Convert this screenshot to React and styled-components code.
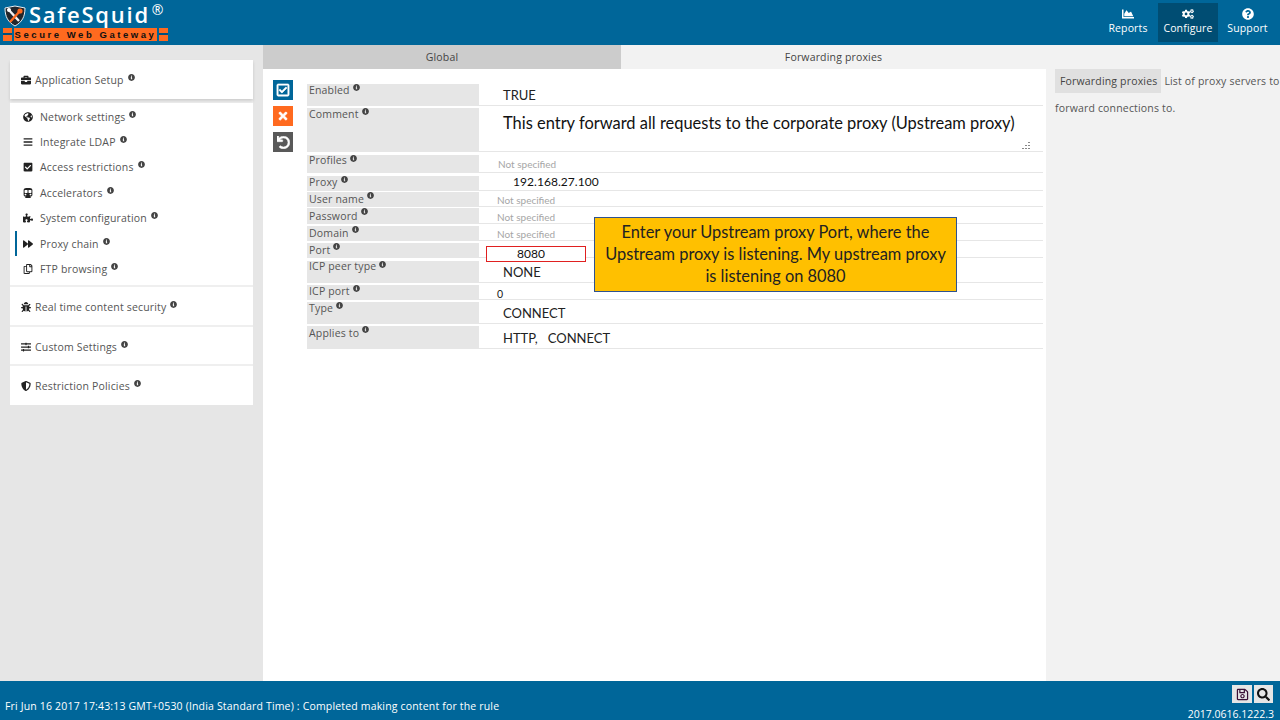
import React from 'react'
import styled, { createGlobalStyle } from 'styled-components'
import {
  FaBriefcase, FaGlobeAmericas, FaBars, FaCheckSquare, FaSubway, FaPuzzlePiece, FaForward,
  FaRegCopy, FaBug, FaSlidersH, FaShieldAlt, FaInfoCircle, FaChartArea, FaCogs,
  FaQuestionCircle, FaRegCheckSquare, FaTimes, FaUndo, FaRegSave, FaSearch,
} from 'react-icons/fa'

const Global = createGlobalStyle`
  html, body { margin: 0; padding: 0; }
  body { font-family: "Open Sans", "Liberation Sans", sans-serif; color: #444; }
`
const Page = styled.div`
  width: 1280px;
  height: 720px;
  display: flex;
  flex-direction: column;
  overflow: hidden;
`
const Header = styled.header`
  height: 45px;
  flex: none;
  background: #006699;
  display: flex;
  justify-content: space-between;
  padding: 3px 0 0 3px;
  box-sizing: border-box;
`
const Logo = styled.div`
  width: 165px;
  display: flex;
  flex-direction: column;
`
const LogoTop = styled.div`
  height: 25px;
  display: flex;
  align-items: center;
  gap: 3px;
  padding-left: 1px;
  color: #fff;
`
const LogoName = styled.span`
  font: 600 22px/18px "Open Sans", sans-serif;
  letter-spacing: 1.75px;
  margin-top: -4px;
`
const LogoMark = styled.span`
  font: 14px/12px "Open Sans", sans-serif;
  margin: -12px 0 0 -1px;
`
const LogoBand = styled.div`
  height: 13px;
  display: flex;
  justify-content: space-between;
`
const LogoEnd = styled.div`
  width: 9px;
  background: linear-gradient(#ff6a1f 0 5px, #00507d 5px 7px, #ff6a1f 7px);
`
const LogoSlogan = styled.div`
  background: #ff6a1f;
  flex: 1;
  margin: 0 2px;
  text-align: center;
  color: #111;
  font: bold 9.5px/13px "Liberation Sans", sans-serif;
  letter-spacing: 2.55px;
  white-space: nowrap;
`
const TopNav = styled.nav`
  display: flex;
  height: 39px;
  padding-right: 3px;
`
const TopItem = styled.div`
  width: ${p => p.$w}px;
  display: flex;
  flex-direction: column;
  align-items: center;
  padding-top: 5px;
  box-sizing: border-box;
  color: #fff;
  background: ${p => (p.$active ? '#004d73' : 'transparent')};
  font-size: 10.5px;
  letter-spacing: 0.15px;
  line-height: 15px;
  svg { width: 12px; height: 12px; margin-bottom: 1px; }
`
const Body = styled.div`
  flex: 1;
  display: flex;
  min-height: 0;
`
const Sidebar = styled.aside`
  width: 263px;
  flex: none;
  background: #e6e6e6;
  padding: 15px 10px 0;
  box-sizing: border-box;
`
const CardStack = styled.div`
  background: #efefef;
`
const Card = styled.div`
  background: #fff;
  height: ${p => p.$h}px;
  margin-bottom: ${p => p.$mb || 0}px;
  box-shadow: ${p => (p.$shadow ? '0 2px 3px rgba(0,0,0,0.14)' : 'none')};
  box-sizing: border-box;
  padding-top: ${p => p.$pt || 0}px;
`
const CardHead = styled.div`
  height: ${p => p.$h}px;
  display: flex;
  align-items: center;
  padding-left: 11px;
  font-size: 10.5px;
  letter-spacing: 0.17px;
  color: #555;
  white-space: nowrap;
  > svg:first-child { width: 10px; height: 10px; color: #222; margin-right: 4px; flex: none; }
`
const SubItem = styled.div`
  height: 25.4px;
  display: flex;
  align-items: center;
  padding-left: 6px;
  margin-left: 5px;
  border-left: 2px solid ${p => (p.$active ? '#006699' : 'transparent')};
  font-size: 10.5px;
  letter-spacing: 0.17px;
  color: #555;
  white-space: nowrap;
  > svg:first-child { width: 10px; height: 10px; color: #222; margin-right: 7px; flex: none; }
`
const Hint = styled(FaInfoCircle)`
  width: 7px;
  height: 7px;
  color: #444;
  margin: -5px 0 0 4px;
  flex: none;
`
const Main = styled.main`
  flex: 1;
  display: flex;
  flex-direction: column;
  min-width: 0;
`
const Tabs = styled.div`
  height: 24px;
  flex: none;
  display: flex;
  background: #f2f2f2;
`
const Tab = styled.div`
  width: ${p => p.$w}px;
  background: ${p => (p.$dark ? '#cccccc' : '#f2f2f2')};
  display: flex;
  align-items: center;
  justify-content: center;
  font-size: 10.5px;
  letter-spacing: 0.17px;
  color: #444;
`
const Content = styled.div`
  flex: 1;
  display: flex;
  min-height: 0;
`
const FormArea = styled.section`
  width: 783px;
  flex: none;
  background: #fff;
  display: flex;
  padding: 11px 0 0 10px;
  box-sizing: border-box;
  position: relative;
`
const Actions = styled.div`
  width: 34px;
  flex: none;
  display: flex;
  flex-direction: column;
  gap: 6px;
`
const ActionBtn = styled.div`
  width: 20px;
  height: 20px;
  background: ${p => p.$bg};
  color: #fff;
  display: flex;
  align-items: center;
  justify-content: center;
  svg {
    width: ${p => p.$s || 14}px;
    height: ${p => p.$s || 14}px;
    stroke: currentColor;
    stroke-width: ${p => p.$bold || 0}px;
  }
`
const Form = styled.div`
  width: 736px;
  padding-top: 4px;
`
const Row = styled.div`
  height: ${p => p.$h}px;
  display: flex;
  border-bottom: 1px solid #e6e6e6;
  margin-bottom: ${p => p.$gap ?? 2}px;
  position: relative;
`
const Label = styled.div`
  width: 172px;
  flex: none;
  background: #e6e6e6;
  padding: 0 0 0 2px;
  box-sizing: border-box;
  display: flex;
  align-items: flex-start;
  font-size: 10.5px;
  line-height: ${p => p.$lh || 13}px;
  letter-spacing: 0.17px;
  color: #555;
  svg { margin: 0 0 0 3px; }
`
const Value = styled.div`
  font-family: "Lato", "Open Sans", sans-serif;
  padding-left: ${p => p.$pl}px;
  padding-top: ${p => p.$pt || 0}px;
  font-size: ${p => p.$fs || 13}px;
  line-height: ${p => p.$lh || 18}px;
  color: ${p => p.$c || '#222'};
  letter-spacing: ${p => p.$ls || 0}px;
  white-space: pre;
`
const Muted = styled.div`
  padding-left: ${p => p.$pl}px;
  font: 10px/${p => p.$lh}px "Lato", "Open Sans", sans-serif;
  color: #a6a6a6;
`
const PortBox = styled.div`
  position: absolute;
  left: 179px;
  top: 3px;
  width: 100px;
  height: 16px;
  box-sizing: border-box;
  border: 1px solid #e02020;
  padding-left: 30px;
  font: 12px/13px "Lato", "Open Sans", sans-serif;
  color: #111;
  background: #fff;
`
const Grip = styled.svg`
  position: absolute;
  right: 12px;
  bottom: 2px;
`
const Callout = styled.div`
  position: absolute;
  left: 331px;
  top: 148px;
  width: 363px;
  height: 75px;
  box-sizing: border-box;
  background: #ffc000;
  border: 1px solid #2f528f;
  color: #222;
  font: 16.4px/22px "Lato", "Open Sans", sans-serif;
  text-align: center;
  padding: 3px 8px 0;
`
const HelpPanel = styled.aside`
  flex: 1;
  background: #f2f2f2;
  margin-top: -1px;
  padding: 0 0 0 9px;
  font-size: 10.5px;
  letter-spacing: 0.17px;
  line-height: 27px;
  color: #555;
  white-space: nowrap;
`
const HelpTag = styled.span`
  background: #e0e0e0;
  padding: 5px 4px 5px 5px;
  color: #444;
  margin-right: 3px;
`
const Footer = styled.footer`
  height: 39px;
  flex: none;
  background: #006699;
  display: flex;
  justify-content: space-between;
  color: #fff;
  box-sizing: border-box;
  padding: 4px 0 0 5px;
`
const Status = styled.div`
  font-size: 10.5px;
  letter-spacing: 0.17px;
  padding-top: 14px;
`
const FooterRight = styled.div`
  display: flex;
  flex-direction: column;
  align-items: flex-end;
  padding-right: 6px;
`
const Tools = styled.div`
  display: flex;
  gap: 2px;
  margin-right: 1px;
`
const ToolBtn = styled.div`
  width: ${p => p.$w || 20}px;
  height: 18px;
  background: #e6e6e6;
  color: ${p => p.$c || '#111'};
  display: flex;
  align-items: center;
  justify-content: center;
  svg { width: 13px; height: 13px; }
`
const Version = styled.div`
  font-size: 10.5px;
  margin-top: 4px;
  line-height: 14px;
`

const Shield = () => (
  <svg width="22" height="22" viewBox="0 0 22 22" style={{ flex: 'none' }}>
    <path d="M1 3 L11 1 L21 3 C21 12 18 17 11 21 C4 17 1 12 1 3 Z" fill="#23262b" stroke="#e8eef2" strokeWidth="1" />
    <path d="M4 4 L15 16" stroke="#f2f2f2" strokeWidth="2.4" />
    <path d="M6 17 L16 6" stroke="#ff6a1f" strokeWidth="2.4" />
    <circle cx="16" cy="6" r="2.6" fill="#ff6a1f" />
    <circle cx="5" cy="5" r="2" fill="#fff" />
  </svg>
)

const menu = [
  { icon: FaGlobeAmericas, text: 'Network settings' },
  { icon: FaBars, text: 'Integrate LDAP' },
  { icon: FaCheckSquare, text: 'Access restrictions' },
  { icon: FaSubway, text: 'Accelerators' },
  { icon: FaPuzzlePiece, text: 'System configuration' },
  { icon: FaForward, text: 'Proxy chain', active: true },
  { icon: FaRegCopy, text: 'FTP browsing' },
]

export default function App() {
  return (
    <Page>
      <Global />
      <Header>
        <Logo>
          <LogoTop><Shield /><LogoName>SafeSquid</LogoName><LogoMark>®</LogoMark></LogoTop>
          <LogoBand>
            <LogoEnd />
            <LogoSlogan>Secure Web Gateway</LogoSlogan>
            <LogoEnd />
          </LogoBand>
        </Logo>
        <TopNav>
          <TopItem $w={60}><FaChartArea />Reports</TopItem>
          <TopItem $w={60} $active><FaCogs />Configure</TopItem>
          <TopItem $w={59}><FaQuestionCircle />Support</TopItem>
        </TopNav>
      </Header>
      <Body>
        <Sidebar>
          <CardStack>
            <Card $h={39} $mb={4} $shadow>
              <CardHead $h={40}><FaBriefcase />Application Setup<Hint /></CardHead>
            </Card>
            <Card $h={182} $mb={2} $pt={1}>
              {menu.map(m => (
                <SubItem key={m.text} $active={m.active}><m.icon />{m.text}<Hint /></SubItem>
              ))}
            </Card>
            <Card $h={38} $mb={2}><CardHead $h={40}><FaBug />Real time content security<Hint /></CardHead></Card>
            <Card $h={37} $mb={2}><CardHead $h={40}><FaSlidersH />Custom Settings<Hint /></CardHead></Card>
            <Card $h={39}><CardHead $h={40}><FaShieldAlt />Restriction Policies<Hint /></CardHead></Card>
          </CardStack>
        </Sidebar>
        <Main>
          <Tabs>
            <Tab $w={358} $dark>Global</Tab>
            <Tab $w={425}>Forwarding proxies</Tab>
          </Tabs>
          <Content>
            <FormArea>
              <Actions>
                <ActionBtn $bg="#006699" $bold={20}><FaRegCheckSquare /></ActionBtn>
                <ActionBtn $bg="#ff6a1f" $s={12} $bold={20}><FaTimes /></ActionBtn>
                <ActionBtn $bg="#595959" $s={13} $bold={20}><FaUndo /></ActionBtn>
              </Actions>
              <Form>
                <Row $h={21}><Label>Enabled<Hint /></Label><Value $pl={24} $pt={2}>TRUE</Value></Row>
                <Row $h={43} $gap={3}>
                  <Label>Comment<Hint /></Label>
                  <Value $pl={24} $pt={6} $fs={16.45} $c="#111">This entry forward all requests to the corporate proxy (Upstream proxy)</Value>
                  <Grip width="9" height="7" viewBox="0 0 9 7" fill="#888">
                    <rect x="6" y="0" width="2" height="1" /><rect x="3" y="3" width="2" height="1" /><rect x="6" y="3" width="2" height="1" />
                    <rect x="0" y="6" width="2" height="1" /><rect x="3" y="6" width="2" height="1" /><rect x="6" y="6" width="2" height="1" />
                  </Grip>
                </Row>
                <Row $h={17} $gap={3}><Label $lh={11}>Profiles<Hint /></Label><Muted $pl={19} $lh={19}>Not specified</Muted></Row>
                <Row $h={14} $gap={1}><Label>Proxy<Hint /></Label><Value $pl={34} $fs={12} $c="#111" $lh={11} $ls={0.05}>192.168.27.100</Value></Row>
                <Row $h={14} $gap={1}><Label $lh={15}>User name<Hint /></Label><Muted $pl={18} $lh={16}>Not specified</Muted></Row>
                <Row $h={15}><Label $lh={17}>Password<Hint /></Label><Muted $pl={18} $lh={19}>Not specified</Muted></Row>
                <Row $h={14}><Label $lh={15}>Domain<Hint /></Label><Muted $pl={18} $lh={16}>Not specified</Muted></Row>
                <Row $h={14} $gap={3}><Label $lh={15}>Port<Hint /></Label><PortBox>8080</PortBox></Row>
                <Row $h={21}><Label $lh={11}>ICP peer type<Hint /></Label><Value $pl={24} $pt={2}>NONE</Value></Row>
                <Row $h={14}><Label>ICP port<Hint /></Label><Value $pl={18} $fs={10.5} $lh={18}>0</Value></Row>
                <Row $h={21}><Label>Type<Hint /></Label><Value $pl={24} $pt={2}>CONNECT</Value></Row>
                <Row $h={22} $gap={0}><Label $lh={15}>Applies to<Hint /></Label><Value $pl={24} $pt={3}>HTTP,   CONNECT</Value></Row>
              </Form>
              <Callout>Enter your Upstream proxy Port, where the Upstream proxy is listening. My upstream proxy is listening on 8080</Callout>
            </FormArea>
            <HelpPanel>
              <HelpTag>Forwarding proxies</HelpTag>List of proxy servers to<br />forward connections to.
            </HelpPanel>
          </Content>
        </Main>
      </Body>
      <Footer>
        <Status>Fri Jun 16 2017 17:43:13 GMT+0530 (India Standard Time) : Completed making content for the rule</Status>
        <FooterRight>
          <Tools>
            <ToolBtn $c="#3a1036"><FaRegSave /></ToolBtn>
            <ToolBtn $w={19}><FaSearch /></ToolBtn>
          </Tools>
          <Version>2017.0616.1222.3</Version>
        </FooterRight>
      </Footer>
    </Page>
  )
}
